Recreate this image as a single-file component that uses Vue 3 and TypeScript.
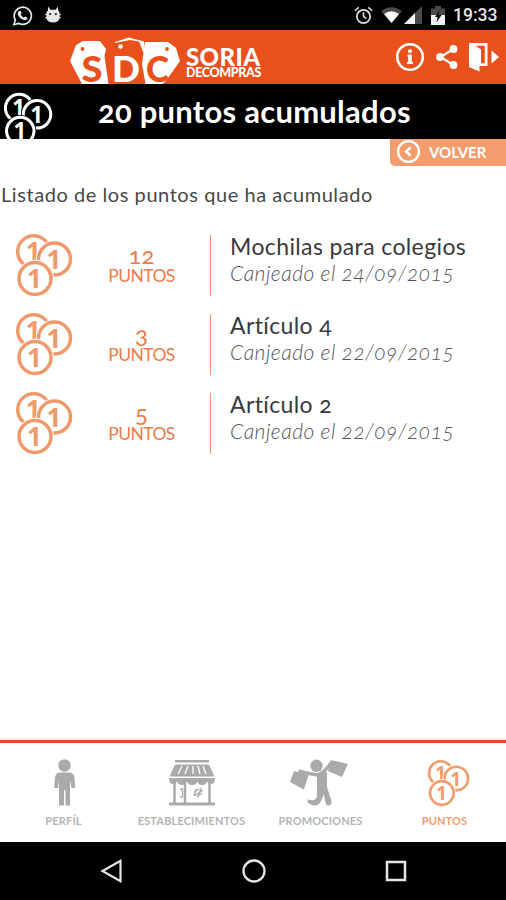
<script setup lang="ts">
import { defineComponent, h } from 'vue'

interface Entry {
  points: number
  title: string
  date: string
}

const entries: Entry[] = [
  { points: 12, title: 'Mochilas para colegios', date: '24/09/2015' },
  { points: 3, title: 'Artículo 4', date: '22/09/2015' },
  { points: 5, title: 'Artículo 2', date: '22/09/2015' },
]

const coins: [number, number][] = [
  [18.7, 18.7],
  [39.5, 26],
  [20, 45.5],
]

const CoinsIcon = defineComponent({
  name: 'CoinsIcon',
  setup: () => () =>
    h(
      'svg',
      { viewBox: '0 0 58 64', class: 'coins' },
      coins.map(([x, y]) =>
        h('g', [
          h('circle', { cx: x, cy: y, r: 18.8, fill: 'var(--coin-bg)' }),
          h('circle', { cx: x, cy: y, r: 16, fill: 'none', stroke: 'currentColor', 'stroke-width': 3.5 }),
          h(
            'text',
            {
              x: x - 0.5,
              y: y + 9.5,
              'text-anchor': 'middle',
              'font-family': 'Open Sans, sans-serif',
              'font-weight': 700,
              'font-size': 26,
              fill: 'currentColor',
            },
            '1',
          ),
        ]),
      ),
    ),
})
</script>

<template>
  <div class="screen">
    <div class="status">
      <svg class="st-wa" viewBox="0 0 22 22">
        <path d="M2 20.5 3.4 15.6A9 9 0 1 1 7 19.2Z" fill="none" stroke="#e8e8e8" stroke-width="1.8" />
        <path d="M7.3 6.2 9 6l1.1 2.7-1 1.3c.8 1.6 1.8 2.5 3.3 3.2l1.3-1.2 2.5 1.3c0 2-1.6 2.7-3 2.5-3.7-.5-7-3.8-7.2-6.7 0-1.3.5-2.4 1.3-2.9Z" fill="#e8e8e8" />
      </svg>
      <svg class="st-cat" viewBox="0 0 18 19">
        <path d="M3.500 0 6 3.500h6L14.500 0l.3 4.500c1.200 1 1.700 2.300 1.700 3.500V13c-.6 3.300-3.200 5-7.500 5s-6.900-1.700-7.500-5V8c0-1.200.5-2.500 1.700-3.500Z" fill="#e8e8e8" />
        <path d="M0 9H18M0 12.500H18" stroke="#e8e8e8" stroke-width="1" />
        <circle cx="5.800" cy="8.500" r="1.300" fill="#222" />
        <circle cx="12.200" cy="8.500" r="1.300" fill="#222" />
      </svg>
      <span class="grow"></span>
      <svg class="st-alarm" viewBox="0 0 20 20">
        <circle cx="10" cy="11" r="7" fill="none" stroke="#ddd" stroke-width="1.900" />
        <path d="M10 6.500V11l3 2.200M1 5 5 1.500M19 5l-4-3.500" fill="none" stroke="#ddd" stroke-width="1.700" />
      </svg>
      <svg class="st-wifi" viewBox="0 0 22 17">
        <path d="M0 4.500Q11-4 22 4.500L11 17Z" fill="#4a4a4a" />
        <path d="M3 7.500Q11 1.500 19 7.500L11 17Z" fill="#fff" />
      </svg>
      <svg class="st-signal" viewBox="0 0 18 18">
        <path d="M18 0V18H0Z" fill="#4a4a4a" />
        <path d="M11 7V18H0Z" fill="#f2f2f2" />
      </svg>
      <svg class="st-batt" viewBox="0 0 14 19">
        <path d="M0 2.500h4V0h6v2.500h4V10H0Z" fill="#4a4a4a" />
        <path d="M0 9h14v10H0Z" fill="#f2f2f2" />
        <path d="M8.500 4 4 11h2.500L5.500 16.500 10.500 9H7.800Z" fill="#111" />
      </svg>
      <span class="clock">19:33</span>
    </div>

    <header class="header">
      <svg class="tags" viewBox="0 0 112 48">
        <path d="M0 25 6 9 13 5 30 5 36 13 34.500 20 38.500 48H12Z" fill="#fff" />
        <path d="M45 6 59 1.500 74 5.500 76 24 72 13 69 5.500 60 4 45 7Z" fill="#fff" />
        <path d="M75 6 98 6 106 12 110 25 98 42 93 48H75.500L72 28Z" fill="#fff" />
        <circle cx="12.500" cy="13" r="1.900" fill="#e9501c" />
        <circle cx="50.500" cy="10.500" r="2.300" fill="#fff" />
        <circle cx="97" cy="13" r="1.900" fill="#e9501c" />
        <text class="tag-letter" x="11.500" y="46" fill="#e9501c" textLength="21" lengthAdjust="spacingAndGlyphs">S</text>
        <text class="tag-letter" x="42" y="46" fill="#fff" textLength="28" lengthAdjust="spacingAndGlyphs">D</text>
        <text class="tag-letter" x="76" y="46" fill="#e9501c" textLength="23" lengthAdjust="spacingAndGlyphs">C</text>
      </svg>
      <div class="brand">
        <span class="brand-top">SORIA</span>
        <span class="brand-sub">DECOMPRAS</span>
      </div>
      <span class="grow"></span>
      <svg class="ic-info" viewBox="0 0 30 30">
        <circle cx="15" cy="15" r="12.800" fill="none" stroke="#fff" stroke-width="2.600" />
        <circle cx="15" cy="9.300" r="2" fill="#fff" />
        <path d="M12.500 12.500h4.300V20H18v2h-6v-2H13.200V14.500H12.500Z" fill="#fff" />
      </svg>
      <svg class="ic-share" viewBox="0 0 22 24">
        <path d="M17.500 4 4.500 12l13 8" fill="none" stroke="#fff" stroke-width="2.200" />
        <circle cx="17.500" cy="4" r="3.900" fill="#fff" />
        <circle cx="4" cy="12" r="3.900" fill="#fff" />
        <circle cx="17.500" cy="20" r="3.900" fill="#fff" />
      </svg>
      <svg class="ic-exit" viewBox="0 0 30 30">
        <path d="M0 1H18.500V24H10.500V29.500L0 25Z" fill="#fff" />
        <path d="M6.500 3.800H15.800V21.300H12V7.500Z" fill="#e9501c" />
        <path d="M22.500 8.500 30 15 22.500 21.500Z" fill="#fff" />
      </svg>
    </header>

    <div class="titlebar">
      <CoinsIcon class="title-coins" />
      <h1>20 puntos acumulados</h1>
    </div>

    <main class="content">
      <button class="back" type="button">
        <svg viewBox="0 0 24 24">
          <circle cx="12" cy="12" r="10" fill="none" stroke="#fff" stroke-width="2.200" />
          <path d="M14 8 9.800 12l4.200 4" fill="none" stroke="#fff" stroke-width="2.500" />
        </svg>
        <span>VOLVER</span>
      </button>
      <p class="intro">Listado de los puntos que ha acumulado</p>
      <ul class="list">
        <li v-for="(e, i) in entries" :key="i">
          <CoinsIcon class="row-coins" />
          <div class="pts">
            <span class="num">{{ e.points }}</span>
            <span class="unit">PUNTOS</span>
          </div>
          <div class="info">
            <span class="name">{{ e.title }}</span>
            <span class="date">Canjeado el {{ e.date }}</span>
          </div>
        </li>
      </ul>
    </main>

    <nav class="tabs">
      <div class="tab profile">
        <svg class="ic-tab" viewBox="0 0 48 48">
          <circle cx="24.500" cy="6.500" r="6.200" fill="#aaa" />
          <path d="M19 13.500H30Q34 14 34.500 19L35.200 29H31.500L30 21V46.500H25.500V31H24V46.500H19V21L18 29H14.200L15 19Q15.500 14 19 13.500Z" fill="#aaa" />
        </svg>
        <span>PERFÍL</span>
      </div>
      <div class="tab shops">
        <svg class="ic-tab" viewBox="0 0 48 48">
          <path d="M7 1H41V3.500H7ZM7 5.500H41L46.500 17.500H1.500Z" fill="#aaa" />
          <path d="M14 7 10 15M20 7 17 15M25 7V15M30 7 32 15M35 7 38 15" stroke="#fff" stroke-width="1.300" />
          <path d="M1 19H47Q47 25 43 25 40 25 39 22.500 38 26 34 26 30.500 26 29.500 22.500 28 26 24 26 20 26 19 22.500 17.500 26 14 26 10.500 26 9 22.500 8 25 5 25 1 25 1 19Z" fill="#aaa" />
          <path d="M6.500 23V45M17 24V45M41.500 23V45" stroke="#aaa" stroke-width="2.500" />
          <path d="M1 45H47" stroke="#aaa" stroke-width="3" />
          <path d="M12 30h2.500v8H12M26 33l5-3M26 37l9-6M29 38l5-4M28 30l-2 7M33 29l-3 9" fill="none" stroke="#aaa" stroke-width="1.300" />
        </svg>
        <span>ESTABLECIMIENTOS</span>
      </div>
      <div class="tab promos">
        <svg class="ic-promo" viewBox="0 0 58 48">
          <circle cx="26.500" cy="6.800" r="6.200" fill="#aaa" />
          <path d="M4 12 18.500 16 14 30.500 0 23Z" fill="#aaa" />
          <path d="M41 1 58 5 52 18 38 12Z" fill="#aaa" />
          <path d="M10 12.500Q20 15 28 16 35 13 41 4" fill="none" stroke="#aaa" stroke-width="3.500" stroke-linecap="round" />
          <path d="M27 15 37 13V28L41.500 42Q42 47 37.500 46.500 35 46 34 35L31 42Q29 47 23 46.500L18 44Q16 39 21 41 27 42 27 36Z" fill="#aaa" />
        </svg>
        <span>PROMOCIONES</span>
      </div>
      <div class="tab active">
        <CoinsIcon class="tab-coins" />
        <span>PUNTOS</span>
      </div>
    </nav>

    <div class="sysbar">
      <svg viewBox="0 0 24 24"><path d="M20.500 1.800V22.200L2.500 12Z" fill="none" stroke="#e6e6e6" stroke-width="2.200" /></svg>
      <svg viewBox="0 0 24 24"><circle cx="12" cy="12" r="10.500" fill="none" stroke="#e6e6e6" stroke-width="2.300" /></svg>
      <svg viewBox="0 0 24 24"><rect x="3" y="3" width="18" height="18" fill="none" stroke="#e6e6e6" stroke-width="2.500" /></svg>
    </div>
  </div>
</template>

<style>
body {
  margin: 0;
  background: #fff;
}
.coins {
  display: block;
  flex: none;
  font-variant-numeric: lining-nums;
}
</style>

<style scoped>
.screen {
  --coin-bg: #fff;
  width: 506px;
  height: 900px;
  display: flex;
  flex-direction: column;
  overflow: hidden;
  background: #fff;
  font-family: Lato, 'Open Sans', sans-serif;
  font-variant-numeric: oldstyle-nums;
}
svg {
  display: block;
  flex: none;
}
.grow {
  flex: 1;
}
.status {
  height: 30px;
  flex: none;
  background: #000;
  display: flex;
  align-items: center;
  padding: 0 9px 0 12px;
}
.st-wa { width: 21px; height: 21px; }
.st-cat { width: 16px; height: 18px; margin-left: 12px; }
.st-alarm { width: 19px; height: 19px; }
.st-wifi { width: 21px; height: 16px; margin-left: 8px; }
.st-signal { width: 18px; height: 18px; margin-left: 2px; }
.st-batt { width: 14px; height: 19px; margin-left: 9px; }
.clock {
  width: 44px;
  margin-left: 8px;
  font: 500 17.500px Roboto, sans-serif;
  color: #e6e6e6;
  white-space: nowrap;
}
.header {
  height: 54px;
  flex: none;
  display: flex;
  align-items: center;
  padding: 0 7px 0 70px;
  background: #e9501c;
  color: #fff;
}
.tags {
  width: 112px;
  height: 48px;
  align-self: flex-end;
  overflow: visible;
}
.tag-letter {
  font: 900 36px Lato, sans-serif;
}
.brand {
  display: flex;
  flex-direction: column;
  margin: 13px 0 0 4px;
}
.brand-top {
  font-size: 24px;
  line-height: 18px;
  font-weight: 900;
  letter-spacing: 0.400px;
}
.brand-sub {
  font-size: 12.500px;
  line-height: 13px;
  font-weight: 900;
  letter-spacing: -0.350px;
}
.ic-info { width: 30px; height: 30px; }
.ic-share { width: 22px; height: 24px; margin-left: 11px; }
.ic-exit { width: 30px; height: 30px; margin-left: 11px; }
.titlebar {
  --coin-bg: #000;
  height: 55px;
  flex: none;
  display: flex;
  background: #000;
  color: #fff;
  overflow: hidden;
}
.title-coins {
  width: 50px;
  height: 55px;
  margin: 8px 0 0 3px;
}
h1 {
  margin: 0 0 0 45px;
  font-size: 31px;
  line-height: 55px;
  font-weight: 700;
  letter-spacing: 0.250px;
  white-space: nowrap;
}
.content {
  flex: 1;
  display: flex;
  flex-direction: column;
}
.back {
  align-self: flex-end;
  width: 116px;
  height: 27px;
  display: flex;
  align-items: center;
  gap: 8px;
  padding: 0 0 2px 6px;
  border: 0;
  border-radius: 0 0 0 5px;
  background: #f39c6e;
  color: #fff;
  font: 700 15px Lato, sans-serif;
}
.back svg {
  width: 25px;
  height: 25px;
}
.intro {
  margin: 15px 0 0 1px;
  font-size: 20px;
  line-height: 26px;
  letter-spacing: 0.560px;
  color: #484848;
  white-space: nowrap;
}
.list {
  list-style: none;
  margin: 26px 0 0;
  padding: 0;
  display: flex;
  flex-direction: column;
  gap: 15px;
}
.list li {
  height: 64px;
  display: flex;
  align-items: center;
}
.row-coins {
  width: 58px;
  height: 64px;
  margin-left: 15px;
  color: #f09a6c;
}
.pts {
  width: 137px;
  height: 61px;
  display: flex;
  flex-direction: column;
  align-items: center;
  color: #ee7a48;
  border-right: 1px solid #f2936a;
}
.num {
  font-size: 24px;
  line-height: 23px;
  margin-top: 8px;
}
.unit {
  font-size: 17.500px;
  line-height: 19px;
  letter-spacing: -0.600px;
}
.info {
  display: flex;
  flex-direction: column;
  height: 61px;
  margin: -4px 0 0 19px;
  white-space: nowrap;
}
.name {
  font-size: 23px;
  line-height: 26px;
  letter-spacing: 0.380px;
  color: #3a3a3a;
}
.date {
  font-size: 21px;
  line-height: 28px;
  font-style: italic;
  font-weight: 300;
  letter-spacing: 0.500px;
  color: #555;
}
.tabs {
  height: 99px;
  flex: none;
  border-top: 3px solid #e64a19;
  display: flex;
}
.tab {
  display: flex;
  flex-direction: column;
  align-items: center;
  color: #b4b4b4;
  font-size: 11px;
  font-weight: 700;
  letter-spacing: 0.150px;
}
.tab svg {
  height: 48px;
  margin-top: 16px;
}
.tab span {
  line-height: 14px;
  margin-top: 7px;
  white-space: nowrap;
}
.profile { width: 127px; }
.shops { width: 129px; }
.promos { width: 129px; }
.active { width: 119px; color: #f39c6e; }
.ic-tab { width: 48px; }
.ic-promo { width: 58px; margin-right: 4px; }
.tab-coins { width: 43px; margin-left: 8px; }
.sysbar {
  flex: none;
  height: 58px;
  background: #000;
  display: flex;
  align-items: center;
  justify-content: space-between;
  padding: 0 98px 0 100px;
}
.sysbar svg {
  width: 24px;
  height: 24px;
}
</style>
